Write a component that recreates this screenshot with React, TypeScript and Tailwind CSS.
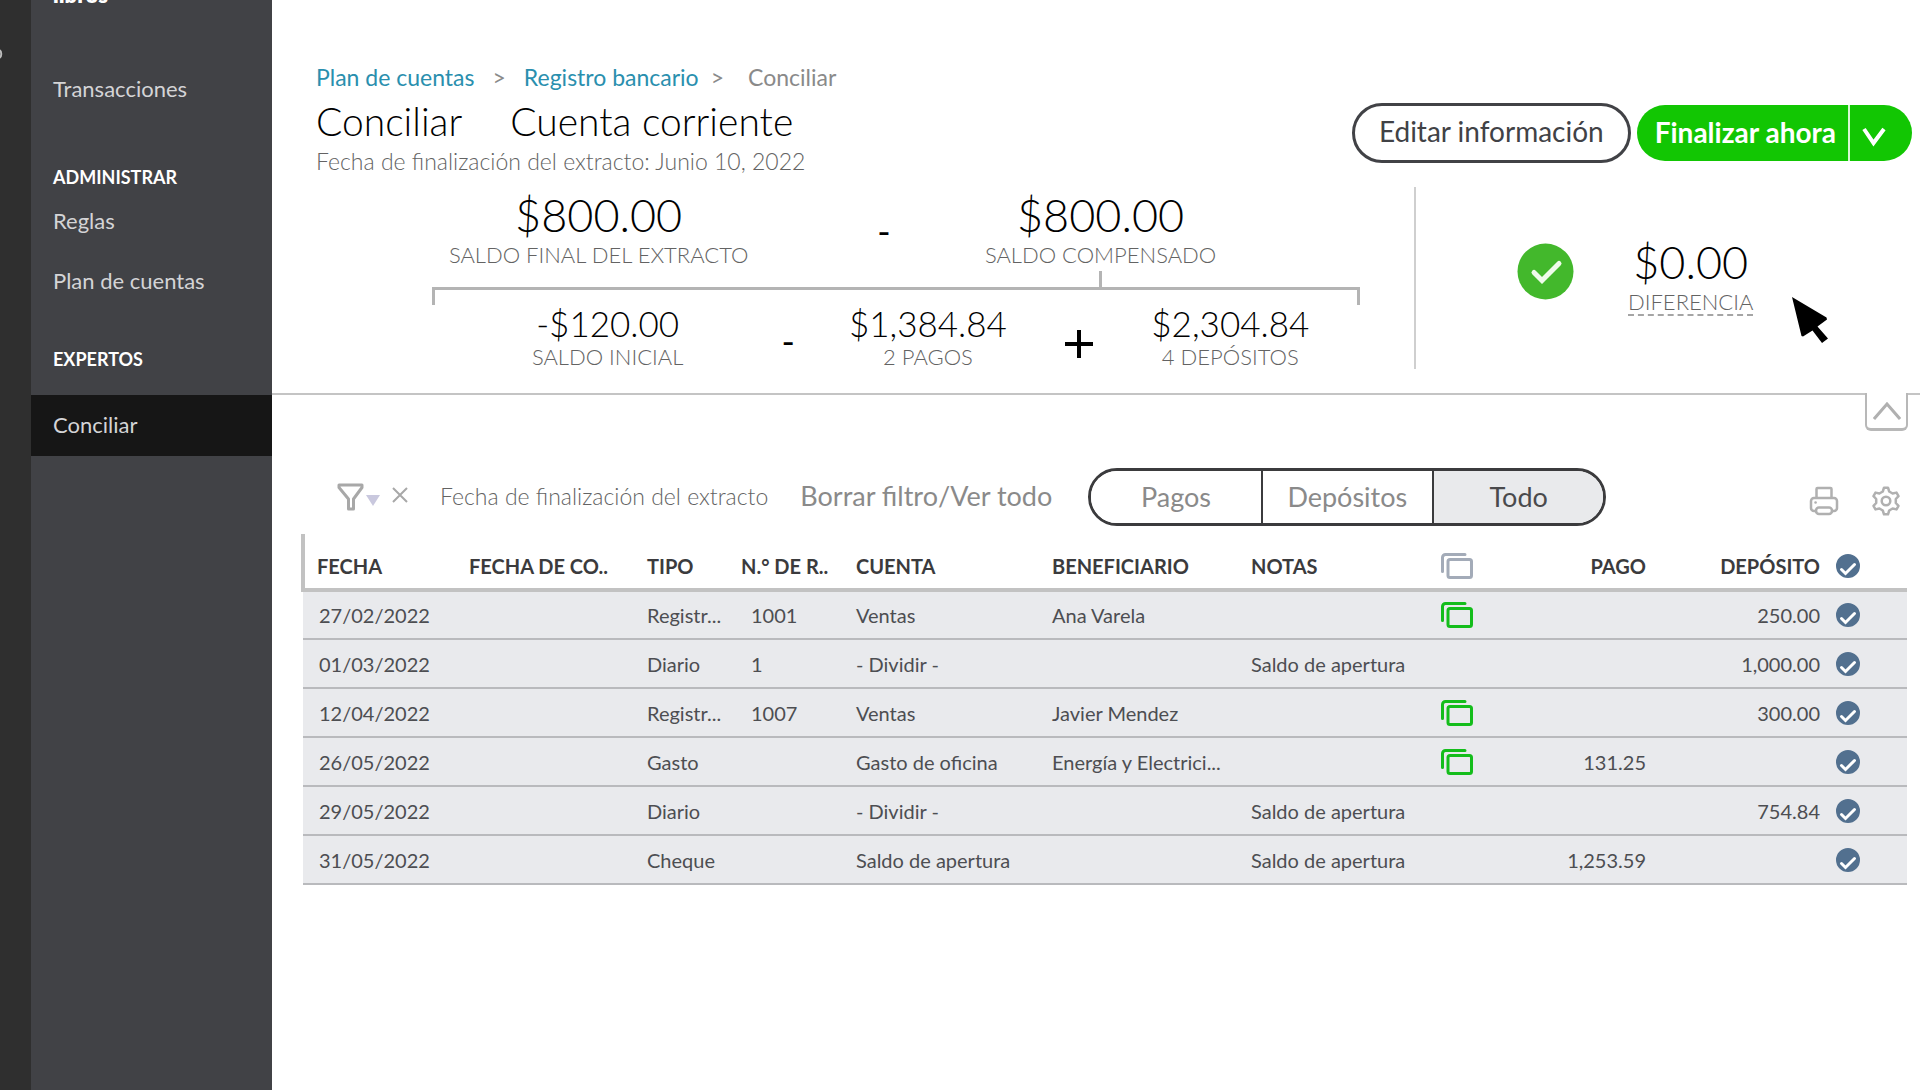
import { useState } from 'react'

interface Entry {
  fecha: string
  tipo: string
  ref?: string
  cuenta: string
  beneficiario?: string
  notas?: string
  match?: boolean
  pago?: string
  deposito?: string
}

const ENTRIES: Entry[] = [
  { fecha: '27/02/2022', tipo: 'Registr...', ref: '1001', cuenta: 'Ventas', beneficiario: 'Ana Varela', match: true, deposito: '250.00' },
  { fecha: '01/03/2022', tipo: 'Diario', ref: '1', cuenta: '- Dividir -', notas: 'Saldo de apertura', deposito: '1,000.00' },
  { fecha: '12/04/2022', tipo: 'Registr...', ref: '1007', cuenta: 'Ventas', beneficiario: 'Javier Mendez', match: true, deposito: '300.00' },
  { fecha: '26/05/2022', tipo: 'Gasto', cuenta: 'Gasto de oficina', beneficiario: 'Energía y Electrici...', match: true, pago: '131.25' },
  { fecha: '29/05/2022', tipo: 'Diario', cuenta: '- Dividir -', notas: 'Saldo de apertura', deposito: '754.84' },
  { fecha: '31/05/2022', tipo: 'Cheque', cuenta: 'Saldo de apertura', notas: 'Saldo de apertura', pago: '1,253.59' },
]

const FILTERS = ['Pagos', 'Depósitos', 'Todo']

function CopyIcon({ className }: { className: string }) {
  return (
    <svg viewBox="0 0 32 26" className={`h-[26px] w-8 ${className}`} fill="none" stroke="currentColor" strokeWidth="3" strokeLinecap="round" aria-hidden="true">
      <path d="M1.5 18.5V4.5a3 3 0 0 1 3-3H24" />
      <rect x="7" y="6.5" width="23.5" height="18" rx="2" />
    </svg>
  )
}

function RoundCheck({ label }: { label: string }) {
  return (
    <label className="grid w-6 cursor-pointer">
      <input
        type="checkbox"
        defaultChecked
        aria-label={label}
        className="peer col-start-1 row-start-1 size-6 appearance-none rounded-full border-2 border-[#52708f] checked:bg-[#52708f]"
      />
      <svg viewBox="0 0 24 24" className="pointer-events-none col-start-1 row-start-1 hidden size-6 text-white peer-checked:block" fill="none" stroke="currentColor" strokeWidth="3" strokeLinecap="round" aria-hidden="true">
        <path d="M5.5 15.5l4 4L18.5 10.5" />
      </svg>
    </label>
  )
}

function Amount({ value, label, large = false }: { value: string; label: string; large?: boolean }) {
  return (
    <div className="flex flex-col items-center font-light whitespace-nowrap">
      <span className={large ? 'text-[45px] leading-[48px] text-black' : 'text-[35px] leading-9 text-black'}>{value}</span>
      <span className="mt-1 text-[22px] leading-6 text-[#636363]">{label}</span>
    </div>
  )
}

function Sidebar() {
  return (
    <nav className="flex w-[241px] shrink-0 flex-col overflow-hidden bg-[#414246] text-[22px] leading-7 text-[#d4d4d6]">
      <span className="-mt-[17px] pl-[22px] leading-6 font-extrabold text-white">libros</span>
      <a href="#transacciones" className="mt-[68px] pl-[22px]">Transacciones</a>
      <h2 className="mt-[62px] pl-[22px] text-lg leading-6 font-bold text-white">ADMINISTRAR</h2>
      <a href="#reglas" className="mt-[18px] pl-[22px]">Reglas</a>
      <a href="#plan" className="mt-8 pl-[22px]">Plan de cuentas</a>
      <h2 className="mt-[52px] pl-[22px] text-lg leading-6 font-bold text-white">EXPERTOS</h2>
      <a href="#conciliar" aria-current="page" className="mt-6 flex h-[61px] items-center bg-[#161616] pb-0.5 pl-[22px]">Conciliar</a>
    </nav>
  )
}

function Header() {
  return (
    <header className="flex items-start justify-between pr-2 pl-11">
      <div className="pt-[63px]">
        <div className="flex text-[23px] leading-7 text-[#8a8a8a]">
          <a href="#plan" className="text-[#2a8fae]">Plan de cuentas</a>
          <span className="mx-[18px]">&gt;</span>
          <a href="#registro" className="text-[#2a8fae]">Registro bancario</a>
          <span className="mr-6 ml-3">&gt;</span>
          <span>Conciliar</span>
        </div>
        <div className="mt-2 flex gap-12 text-[39px] leading-[44px] font-light text-black">
          <h1>Conciliar</h1>
          <span>Cuenta corriente</span>
        </div>
        <p className="mt-1 text-[23px] leading-7 font-light text-[#636363]">Fecha de finalización del extracto: Junio 10, 2022</p>
      </div>
      <div className="flex items-center gap-1.5 pt-[103px] text-[28px]">
        <button className="h-[60px] rounded-full border-[3px] border-[#414246] px-6 pb-1 leading-8 text-[#414246]">Editar información</button>
        <div className="flex h-14 overflow-hidden rounded-full bg-[#12c603] text-white">
          <button className="border-r-2 border-[#d8f8d4] pr-3 pb-0.5 pl-[18px] leading-8 font-bold">Finalizar ahora</button>
          <button aria-label="Más opciones" className="flex w-[62px] items-center pl-3">
            <svg viewBox="0 0 24 20" className="mt-2 h-5 w-6" fill="none" stroke="currentColor" strokeWidth="4" aria-hidden="true">
              <path d="M2 2l9.5 14L22 2" />
            </svg>
          </button>
        </div>
      </div>
    </header>
  )
}

function Summary() {
  return (
    <section className="relative mt-3 grid grid-cols-[1144fr_504fr] border-b-2 border-[#c4c4c4] pb-6">
      <div className="min-w-0 border-r-2 border-[#cfcfcf]">
        <div className="pr-12 pl-40">
          <div className="grid grid-cols-[334fr_238fr_196fr_168fr] pt-1 [&>*]:min-w-0">
            <Amount large value="$800.00" label="SALDO FINAL DEL EXTRACTO" />
            <span className="self-center pt-1 text-center text-4xl text-black">-</span>
            <Amount large value="$800.00" label="SALDO COMPENSADO" />
          </div>
          <div className="mr-1.5">
            <div className="grid grid-cols-[671fr_259fr] pt-1">
              <span className="h-4 w-[3px] justify-self-end bg-[#b4b4b4]" />
            </div>
            <div className="h-[18px] border-x-[3px] border-t-[3px] border-[#b4b4b4]" />
          </div>
          <div className="grid grid-cols-[352fr_10fr_270fr_32fr_272fr] [&>*]:min-w-0">
            <Amount value="-$120.00" label="SALDO INICIAL" />
            <span className="mt-4 flex justify-center text-4xl text-black">-</span>
            <Amount value="$1,384.84" label="2 PAGOS" />
            <svg viewBox="0 0 30 30" className="mt-6 h-[30px] w-[30px] justify-self-center text-black" stroke="currentColor" strokeWidth="4" aria-hidden="true">
              <path d="M1 15h28M15 1v28" />
            </svg>
            <Amount value="$2,304.84" label="4 DEPÓSITOS" />
          </div>
        </div>
      </div>
      <div className="relative flex items-start pl-[101px]">
        <svg viewBox="0 0 57 57" className="mt-14 size-[57px] shrink-0" fill="none" aria-hidden="true">
          <circle cx="28.500" cy="28.500" r="28" fill="#43b82c" />
          <path d="M17 29.500l8 8L42 20.500" stroke="#effbea" strokeWidth="5" strokeLinecap="round" />
        </svg>
        <div className="mt-[51px] ml-[54px] flex flex-col items-center font-light">
          <span className="text-[45px] leading-[48px] text-black">$0.00</span>
          <span className="mt-1 border-b-2 border-dashed border-[#a5a5a5] text-[22px] leading-6 text-[#636363]">DIFERENCIA</span>
        </div>
        {/* Mouse pointer */}
        <svg viewBox="0 0 36 46" className="absolute top-[110px] left-[376px] h-[46px] w-9" fill="#000" aria-hidden="true">
          <path d="M0 0L34.500 20.500L35 22.500L25.500 29.500L36 41.500L30 46L20.500 33.500L11 39.500L9.500 39z" />
        </svg>
      </div>
      <button aria-label="Contraer resumen" className="absolute top-full right-3 flex h-[38px] w-[43px] items-center justify-center rounded-b-md border-x-2 border-b-3 border-[#b8b8b8] bg-white">
        <svg viewBox="0 0 28 18" className="h-[18px] w-7 text-[#b0b0b0]" fill="none" stroke="currentColor" strokeWidth="3" aria-hidden="true">
          <path d="M1 17L14 2l13 15" />
        </svg>
      </button>
    </section>
  )
}

function Toolbar() {
  const [filter, setFilter] = useState('Todo')

  return (
    <div className="mt-[73px] flex items-center pr-[19px] pl-[65px] text-[#8a8a8a]">
      <button aria-label="Filtrar" className="flex items-end">
        <svg viewBox="0 0 27 28" className="h-7 w-[27px] text-[#a8a8a8]" fill="none" stroke="currentColor" strokeWidth="3" strokeLinejoin="round" aria-hidden="true">
          <path d="M2 2h23v2.500L16.500 16v10h-5V16L2 4.500z" />
        </svg>
        <svg viewBox="0 0 14 12" className="mb-1 ml-0.5 h-3 w-3.5" aria-hidden="true">
          <path d="M0 0h14L7 11z" fill="#c9c8de" />
        </svg>
      </button>
      <button aria-label="Quitar filtro" className="mb-1 ml-3">
        <svg viewBox="0 0 16 16" className="size-4 text-[#a8a8a8]" stroke="currentColor" strokeWidth="2" aria-hidden="true">
          <path d="M1 1l14 14M15 1L1 15" />
        </svg>
      </button>
      <span className="ml-8 pb-0.5 text-[23px] leading-7 font-light text-[#636363]">Fecha de finalización del extracto</span>
      <button className="ml-8 pb-0.5 text-[27px] leading-8">Borrar filtro/Ver todo</button>
      <div className="ml-9 flex h-[58px] w-[518px] overflow-hidden rounded-full border-[3px] border-[#3b3b3d] text-[27px] leading-8">
        {FILTERS.map((name) => (
          <button
            key={name}
            aria-pressed={filter === name}
            onClick={() => setFilter(name)}
            className={`flex-1 border-[#3b3b3d] not-last:border-r-2 ${filter === name ? 'bg-[#e9eaec] text-[#4a4a4c]' : 'bg-white'}`}
          >
            {name}
          </button>
        ))}
      </div>
      <div className="mt-2 ml-auto flex gap-8 text-[#b0b0b0]">
        <button aria-label="Imprimir">
          <svg viewBox="0 0 30 30" className="size-[30px]" fill="none" stroke="currentColor" strokeWidth="2.500" strokeLinejoin="round" strokeLinecap="round" aria-hidden="true">
            <path d="M7.500 12V3a1 1 0 0 1 1-1h13a1 1 0 0 1 1 1v9M7 25H5a3 3 0 0 1-3-3v-7a3 3 0 0 1 3-3h20a3 3 0 0 1 3 3v7a3 3 0 0 1-3 3h-2" />
            <rect x="7" y="21.500" width="16" height="6.500" rx="3" />
            <path d="M6.500 16.500h.1" />
          </svg>
        </button>
        <button aria-label="Configuración">
          <svg viewBox="-15 -15 30 30" className="size-[30px]" fill="none" stroke="currentColor" strokeWidth="2.500" strokeLinejoin="round" aria-hidden="true">
            <path d="M-3.200-9.500L-2-13.300H2L3.200-9.500L6.600-7.500L10.500-8.400L12.500-4.900L9.800-2V2L12.500 4.900L10.500 8.400L6.600 7.500L3.200 9.500L2 13.300H-2L-3.200 9.500L-6.600 7.500L-10.500 8.400L-12.500 4.900L-9.800 2V-2L-12.500-4.900L-10.500-8.400L-6.600-7.500z" />
            <circle cx="0" cy="0" r="4.300" />
          </svg>
        </button>
      </div>
    </div>
  )
}

function EntriesTable() {
  return (
    <div className="mt-2 pr-[15px] pl-[29px]">
      <table className="w-full table-fixed border-collapse text-left text-xl leading-6 whitespace-nowrap text-[#4d4e52]">
        <colgroup>
          <col className="w-[166px]" />
          <col className="w-[178px]" />
          <col className="w-[94px]" />
          <col className="w-[115px]" />
          <col className="w-[196px]" />
          <col className="w-[199px]" />
          <col className="w-[190px]" />
          <col className="w-[79px]" />
          <col className="w-[126px]" />
          <col className="w-[174px]" />
          <col className="w-[87px]" />
        </colgroup>
        <thead>
          <tr className="h-14 border-b-4 border-[#c2c2c2] text-[#3b3b3d] [&>th]:pt-2.5 [&>th]:font-bold">
            <th className="border-l-4 border-[#c2c2c2] pl-3">FECHA</th>
            <th>FECHA DE CO..</th>
            <th>TIPO</th>
            <th>N.° DE R..</th>
            <th>CUENTA</th>
            <th>BENEFICIARIO</th>
            <th>NOTAS</th>
            <th><CopyIcon className="text-[#a3abb8]" /></th>
            <th className="text-right">PAGO</th>
            <th className="text-right">DEPÓSITO</th>
            <th className="pl-4"><RoundCheck label="Seleccionar todo" /></th>
          </tr>
        </thead>
        <tbody>
          {ENTRIES.map((entry) => (
            <tr key={entry.fecha} className="h-[49px] border-b-2 border-[#b9babd] bg-[#e9eaed]">
              <td className="pl-4">{entry.fecha}</td>
              <td />
              <td>{entry.tipo}</td>
              <td className="pl-2.5">{entry.ref}</td>
              <td>{entry.cuenta}</td>
              <td>{entry.beneficiario}</td>
              <td>{entry.notas}</td>
              <td>{entry.match && <CopyIcon className="text-[#14bd1b]" />}</td>
              <td className="text-right">{entry.pago}</td>
              <td className="text-right">{entry.deposito}</td>
              <td className="pl-4"><RoundCheck label={`Seleccionar ${entry.fecha}`} /></td>
            </tr>
          ))}
        </tbody>
      </table>
    </div>
  )
}

export default function App() {
  return (
    <div className="flex min-h-screen bg-white font-['Lato',sans-serif]">
      <div className="w-[31px] shrink-0 bg-[#2f2f2f]">
        <svg viewBox="0 0 3 10" className="mt-[49px] h-2.5 w-[3px]" fill="none" stroke="#bdbdbd" strokeWidth="2" aria-hidden="true">
          <path d="M-1 1c3 1 3 7 0 8" />
        </svg>
      </div>
      <Sidebar />
      <main className="min-w-0 flex-1">
        <Header />
        <Summary />
        <Toolbar />
        <EntriesTable />
      </main>
    </div>
  )
}
